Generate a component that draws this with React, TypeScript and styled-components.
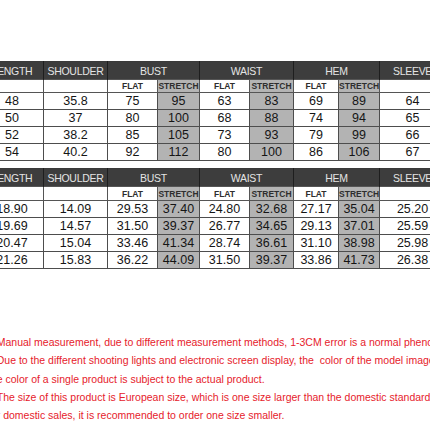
import React from "react";
import styled, { createGlobalStyle } from "styled-components";

const GlobalStyle = createGlobalStyle`
  html, body {
    margin: 0;
    padding: 0;
    background: #ffffff;
    overflow: hidden;
  }
  body {
    font-family: "Liberation Sans", Arial, sans-serif;
  }
`;

const COLS = [63, 64, 50, 42, 50, 44, 45, 41, 66];

const Sheet = styled.div`
  width: 465px;
  margin-left: -20px;
  padding-top: 61px;
  display: flex;
  flex-direction: column;
  gap: 7px;
`;

const Table = styled.table`
  width: 465px;
  table-layout: fixed;
  border-collapse: collapse;
  border: 1px solid #3a3a3a;
`;

const HeadCell = styled.th`
  height: 17px;
  padding: 0;
  background: #3d3d3d;
  color: #e4e4e4;
  font-size: 10.5px;
  font-weight: normal;
  letter-spacing: -0.3px;
  text-align: center;
  border-left: 1px solid #1e1e1e;
  white-space: nowrap;
  overflow: hidden;
`;

const SubCell = styled.td<{ $gray?: boolean; $h: number }>`
  height: ${(p) => p.$h}px;
  padding: 0;
  background: ${(p) => (p.$gray ? "#b4b4b4" : "#ffffff")};
  color: #2e2e2e;
  font-size: 8.5px;
  font-weight: bold;
  text-align: center;
  border: 1px solid #555555;
  white-space: nowrap;
  overflow: hidden;
`;

const Cell = styled.td<{ $gray?: boolean }>`
  height: 16px;
  padding: 0;
  background: ${(p) => (p.$gray ? "#b3b3b3" : "#ffffff")};
  color: #151515;
  font-size: 12.5px;
  text-align: center;
  border: 1px solid #4d4d4d;
  white-space: nowrap;
`;

const Notes = styled.div`
  margin-top: 57px;
  padding-left: 8px;
  color: #e6212b;
  font-size: 10.5px;
  line-height: 18.3px;
  white-space: pre;
`;

type SizeTableProps = {
  rows: string[][];
  subHeight: number;
};

const gray = [3, 5, 7];

const SizeTable = ({ rows, subHeight }: SizeTableProps) => (
  <Table>
    <colgroup>
      {COLS.map((w, i) => (
        <col key={i} style={{ width: w }} />
      ))}
    </colgroup>
    <thead>
      <tr>
        <HeadCell>LENGTH</HeadCell>
        <HeadCell>SHOULDER</HeadCell>
        <HeadCell colSpan={2}>BUST</HeadCell>
        <HeadCell colSpan={2}>WAIST</HeadCell>
        <HeadCell colSpan={2}>HEM</HeadCell>
        <HeadCell>SLEEVE</HeadCell>
      </tr>
    </thead>
    <tbody>
      <tr>
        <SubCell $h={subHeight} />
        <SubCell $h={subHeight} />
        <SubCell $h={subHeight}>FLAT</SubCell>
        <SubCell $h={subHeight} $gray>STRETCH</SubCell>
        <SubCell $h={subHeight}>FLAT</SubCell>
        <SubCell $h={subHeight} $gray>STRETCH</SubCell>
        <SubCell $h={subHeight}>FLAT</SubCell>
        <SubCell $h={subHeight} $gray>STRETCH</SubCell>
        <SubCell $h={subHeight} />
      </tr>
      {rows.map((r, i) => (
        <tr key={i}>
          {r.map((v, j) => (
            <Cell key={j} $gray={gray.includes(j)}>
              {v}
            </Cell>
          ))}
        </tr>
      ))}
    </tbody>
  </Table>
);

const cmRows = [
  ["48", "35.8", "75", "95", "63", "83", "69", "89", "64"],
  ["50", "37", "80", "100", "68", "88", "74", "94", "65"],
  ["52", "38.2", "85", "105", "73", "93", "79", "99", "66"],
  ["54", "40.2", "92", "112", "80", "100", "86", "106", "67"],
];

const inchRows = [
  ["18.90", "14.09", "29.53", "37.40", "24.80", "32.68", "27.17", "35.04", "25.20"],
  ["19.69", "14.57", "31.50", "39.37", "26.77", "34.65", "29.13", "37.01", "25.59"],
  ["20.47", "15.04", "33.46", "41.34", "28.74", "36.61", "31.10", "38.98", "25.98"],
  ["21.26", "15.83", "36.22", "44.09", "31.50", "39.37", "33.86", "41.73", "26.38"],
];

const notes = [
  "1.Manual measurement, due to different measurement methods, 1-3CM error is a normal phenomenon.",
  "2.Due to the different shooting lights and electronic screen display, the  color of the model image and",
  "the color of a single product is subject to the actual product.",
  "3.The size of this product is European size, which is one size larger than the domestic standard",
  "for domestic sales, it is recommended to order one size smaller.",
];

export default function App() {
  return (
    <>
      <GlobalStyle />
      <Sheet>
        <SizeTable rows={cmRows} subHeight={12} />
        <SizeTable rows={inchRows} subHeight={13} />
        <Notes>
          {notes.map((n, i) => (
            <div key={i}>{n}</div>
          ))}
        </Notes>
      </Sheet>
    </>
  );
}
